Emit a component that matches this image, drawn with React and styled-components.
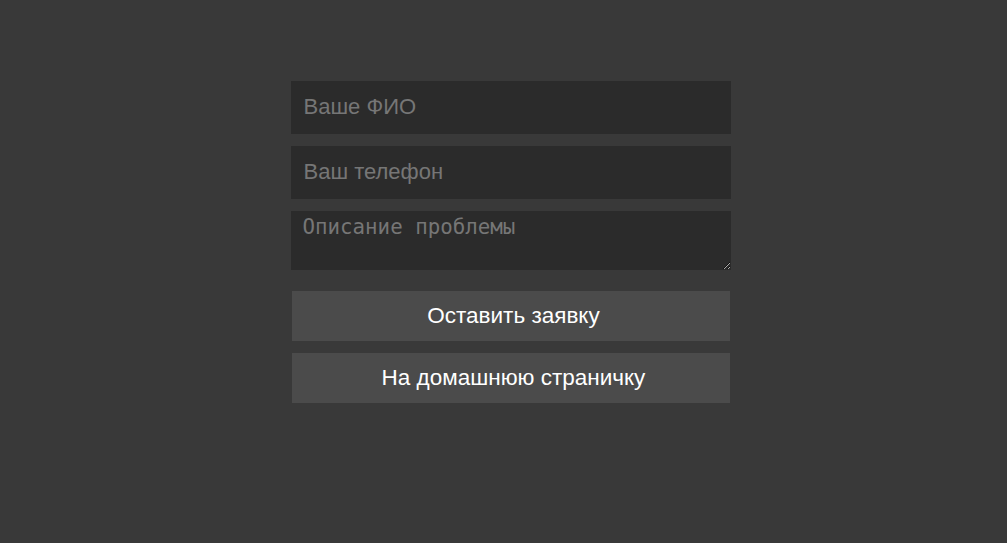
import React from "react"
import styled, { createGlobalStyle } from "styled-components"

const GlobalStyle = createGlobalStyle`
  html, body {
    margin: 0;
    padding: 0;
    background: #393939;
  }
  body {
    font-family: "Liberation Sans", Arial, sans-serif;
  }
`

// full window wrapper, form sits slightly right of centre
const Page = styled.div`
  width: 100%;
  height: 543px;
  display: flex;
  justify-content: center;
  padding: 81px 0 0 14px;
  box-sizing: border-box;
`

const Form = styled.form`
  width: 440px;
  display: flex;
  flex-direction: column;
`

const Field = styled.input`
  box-sizing: border-box;
  width: 100%;
  height: 53px;
  margin-bottom: 12px;
  padding: 0 13px 2px;
  border: none;
  outline: none;
  background: #2b2b2b;
  color: #ddd;
  font-family: "Liberation Sans", Arial, sans-serif;
  font-size: 22px;

  &::placeholder {
    color: #767676;
  }
`

const Area = styled.textarea`
  box-sizing: border-box;
  width: 100%;
  height: 59px;
  margin: 0 0 21px;
  padding: 4px 12px;
  border: none;
  outline: none;
  background: #2b2b2b;
  color: #ddd;
  font-family: "DejaVu Sans Mono", monospace;
  font-size: 20.8px;
  resize: vertical;

  &::placeholder {
    color: #767676;
  }
`

const Button = styled.button`
  box-sizing: border-box;
  width: 438px;
  height: 50px;
  margin: 0 1px 12px;
  padding: 0 0 0 6px;
  border: none;
  background: #4b4b4b;
  color: #fff;
  font-family: "Liberation Sans", Arial, sans-serif;
  font-size: 22.5px;
  cursor: pointer;
`

export default function App() {
  return (
    <>
      <GlobalStyle />
      <Page>
        <Form onSubmit={e => e.preventDefault()}>
          <Field type="text" placeholder="Ваше ФИО" />
          <Field type="tel" placeholder="Ваш телефон" />
          <Area placeholder="Описание проблемы" />
          <Button type="submit">Оставить заявку</Button>
          <Button type="button">На домашнюю страничку</Button>
        </Form>
      </Page>
    </>
  )
}
